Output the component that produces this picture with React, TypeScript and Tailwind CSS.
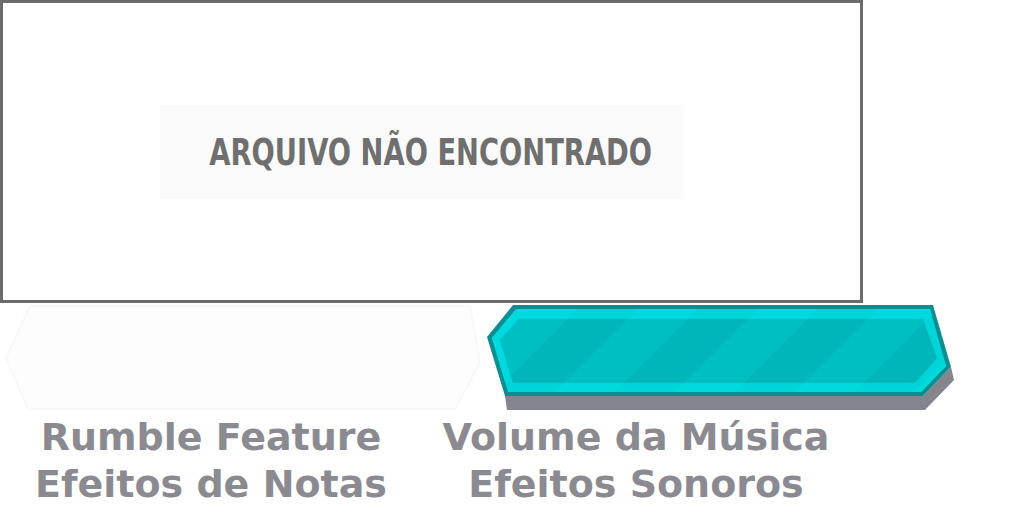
import React from 'react';

const CyanBar: React.FC = () => {
  // local coords: origin at (484, 303)
  const outer = '29,2 449,2 467,64 439,93 21,93 3,34';
  const shadow = '21,93 439,93 467,64 470,77 441,107 23,107';
  const light = '32,6 446,6 462,63 437,89 24,89 8,35';
  const inner = '35,16 439,16 453,55 431,80 29,80 16,37';
  const stripes = [0, 120, 240, 360, 480];
  return (
    <svg width="474" height="110" viewBox="0 0 474 110" className="block">
      <defs>
        <clipPath id="innerClip">
          <polygon points={inner} />
        </clipPath>
        <clipPath id="lightClip">
          <polygon points={light} />
        </clipPath>
      </defs>
      <polygon points={shadow} fill="#85858d" />
      <polygon points={outer} fill="#0b8e91" />
      <polygon points={light} fill="#00d4d8" />
      <g clipPath="url(#lightClip)">
        {stripes.map((x) => (
          <polygon key={x} points={`${x + 40},0 ${x + 100},0 ${x},100 ${x - 60},100`} fill="#00dade" />
        ))}
      </g>
      <polygon points={inner} fill="#00b6ba" />
      <g clipPath="url(#innerClip)">
        {stripes.map((x) => (
          <polygon key={x} points={`${x + 40},0 ${x + 100},0 ${x},100 ${x - 60},100`} fill="#00bfc3" />
        ))}
      </g>
    </svg>
  );
};

const GhostBar: React.FC = () => (
  <svg width="484" height="110" viewBox="0 0 484 110" className="block">
    <polygon points="30,3 470,3 480,60 455,106 28,106 6,55" fill="#fdfdfd" stroke="#f8f8f8" strokeWidth="2" />
  </svg>
);

export default function App() {
  return (
    <div className="w-[1024px] h-[512px] bg-white overflow-hidden">
      <div className="w-[863px] h-[303px] border-[3px] border-[#6b6b6b] flex items-center pl-[157px]">
        <div className="w-[523px] h-[94px] bg-[#fafafa] flex items-center justify-center pl-[19px]">
          <span
            className="text-[#6f6f6f] text-[38px] leading-none font-bold whitespace-nowrap inline-block scale-x-[0.8]"
            style={{ fontFamily: '"DejaVu Sans Condensed", "DejaVu Sans", sans-serif' }}
          >
            ARQUIVO NÃO ENCONTRADO
          </span>
        </div>
      </div>
      <div className="flex">
        <GhostBar />
        <CyanBar />
      </div>
      <div
        className="flex text-[#8a8a90] font-bold text-[38px] leading-[47px] mt-[1px]"
        style={{ fontFamily: '"DejaVu Sans", sans-serif' }}
      >
        <div className="w-[422px] text-center">
          <div>Rumble Feature</div>
          <div>Efeitos de Notas</div>
        </div>
        <div className="w-[428px] text-center">
          <div>Volume da Música</div>
          <div>Efeitos Sonoros</div>
        </div>
      </div>
    </div>
  );
}
